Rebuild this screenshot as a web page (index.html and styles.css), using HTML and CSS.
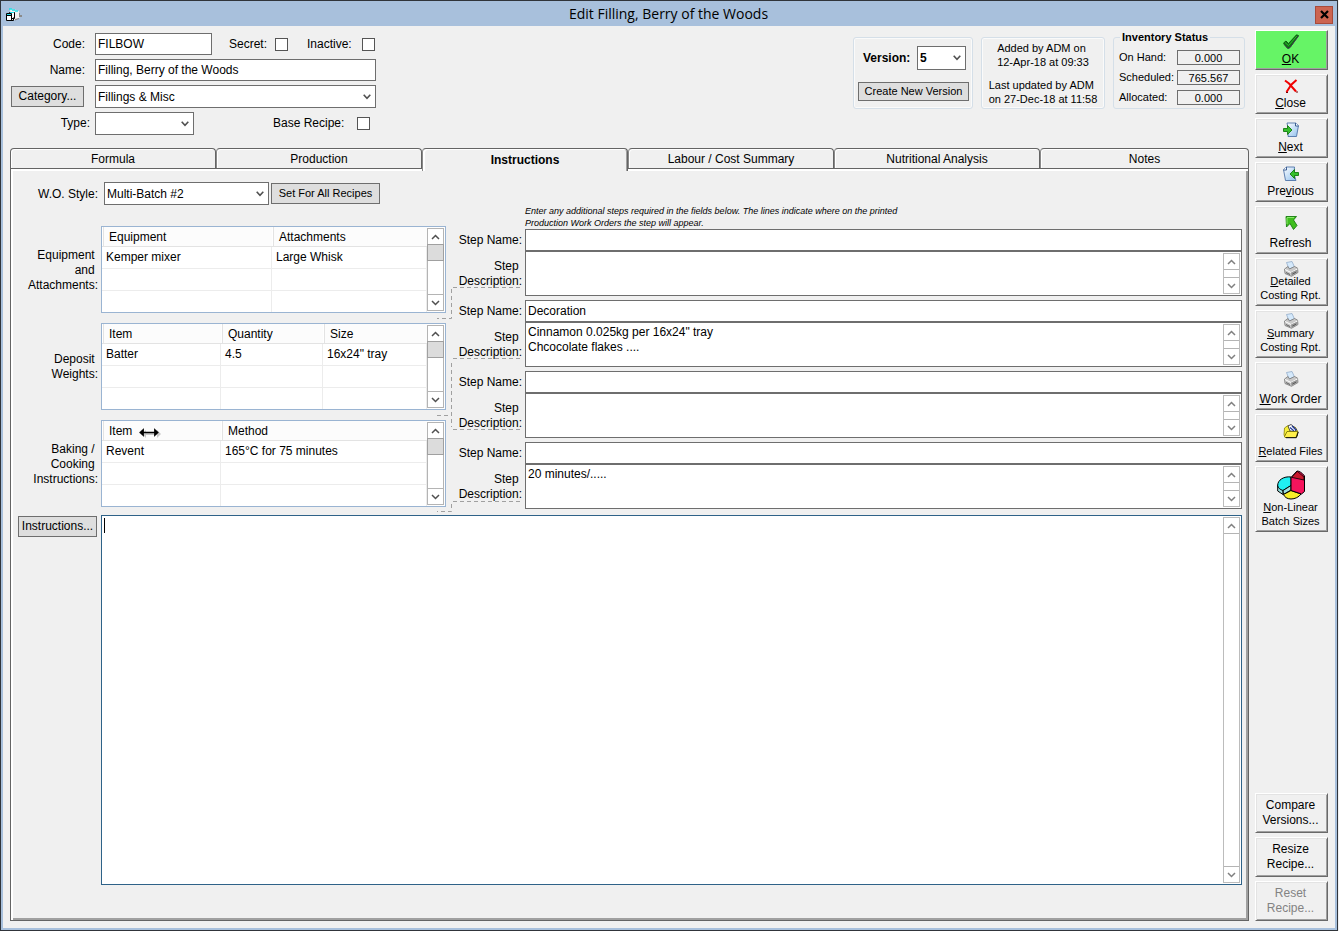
FILE: index.html
```html
<!DOCTYPE html>
<html lang="en">
<head>
<meta charset="utf-8">
<title>Edit Filling, Berry of the Woods</title>
<link rel="stylesheet" href="styles.css">
</head>
<body>
<svg class="defs" width="0" height="0" aria-hidden="true">
  <defs>
    <symbol id="up" viewBox="0 0 9 6"><path d="M1 5 4.500 1.500 8 5" fill="none" stroke="currentColor" stroke-width="1.500"/></symbol>
    <symbol id="down" viewBox="0 0 9 6"><path d="M1 1 4.500 4.500 8 1" fill="none" stroke="currentColor" stroke-width="1.500"/></symbol>
    <linearGradient id="page" x1="0" y1="0" x2="1" y2="1"><stop offset="0" stop-color="#fff"/><stop offset="1" stop-color="#8fc0ee"/></linearGradient>
    <symbol id="printer" viewBox="0 0 16 16">
      <path d="M3.500 1.500 9 .5 11.500 6 6 8z" fill="#d5e9fb" stroke="#8aa5c4" stroke-width=".7"/>
      <path d="M1.500 8 5 5.500 6.500 8 11.500 5.500 14.500 7 15 11.500 8.500 15.300 2 12.500z" fill="#c9c9c9" stroke="#777" stroke-width=".8"/>
      <path d="M2 8.500 8 11.500 14.500 8" fill="none" stroke="#fff" stroke-width="1"/>
      <path d="M8 11.500 14.500 8.500v3L8.500 15z" fill="#999"/>
      <path d="M3 11.500 7 13.500M9.500 13 13 11.200" stroke="#555" stroke-width=".9"/>
    </symbol>
  </defs>
</svg>
<div class="window">
  <header class="titlebar">
    <svg class="app-icon" width="16" height="14" viewBox="0 0 16 14" aria-hidden="true">
      <path d="M4 1h3l6 2 .5 7-5 2H5z" fill="#f2f2f2"/><path d="M3 1h3M6 2h3M9 3h3" fill="none" stroke="#20dfe8" stroke-width="1.500"/>
      <path d="M13 5h1v2h2v2h-3zM9 11l4-1v1l-4 1.500z" fill="#8a8a8a"/>
      <path d="M3.500 4.500h5v6h-5z" fill="#fff" stroke="#000"/><path d="M.500 5.500h5v7h-5z" fill="#fff" stroke="#000"/>
      <path d="M4.500 12.500h3v-3" fill="none" stroke="#000"/>
      <path d="M1 6h4v1H1zM4 4h4v1H4z" fill="#20dfe8"/><path d="M0 7h6v1H0z"/>
    </svg>
    <h1>Edit Filling, Berry of the Woods</h1>
    <button class="win-close" aria-label="Close window"><svg width="9" height="9" viewBox="0 0 9 9"><path d="M1 1 8 8M8 1 1 8" stroke="#000" stroke-width="2.200"/></svg></button>
  </header>
  <div class="body">
    <main class="content">
      <div class="top">
        <form class="form">
          <div class="row"><label class="lbl" for="code">Code:</label><input class="field code" id="code" value="FILBOW">
            <label class="secret" for="secret">Secret:</label><input type="checkbox" class="check" id="secret">
            <label class="inactive" for="inactive">Inactive:</label><input type="checkbox" class="check" id="inactive"></div>
          <div class="row"><label class="lbl" for="name">Name:</label><input class="field long" id="name" value="Filling, Berry of the Woods"></div>
          <div class="row"><button type="button" class="btn category">Category...</button><select class="field long" aria-label="Category"><option>Fillings &amp; Misc</option></select></div>
          <div class="row"><label class="lbl type" for="type">Type:</label><select class="field short" id="type"><option></option></select>
            <label class="base" for="base">Base Recipe:</label><input type="checkbox" class="check" id="base"></div>
        </form>
        <div class="groups">
          <section class="group version">
            <div class="version-row"><label for="ver">Version:</label><select class="field" id="ver"><option>5</option></select></div>
            <button class="btn small">Create New Version</button>
          </section>
          <section class="group audit">
            <p>Added by ADM on<br>12-Apr-18 at 09:33</p>
            <p>Last updated by ADM<br>on 27-Dec-18 at 11:58</p>
          </section>
          <fieldset class="group stock">
            <legend>Inventory Status</legend>
            <div class="stock-row"><span>On Hand:</span><output>0.000</output></div>
            <div class="stock-row"><span>Scheduled:</span><output>765.567</output></div>
            <div class="stock-row"><span>Allocated:</span><output>0.000</output></div>
          </fieldset>
        </div>
      </div>
      <nav class="tabs" role="tablist">
        <button class="tab" role="tab">Formula</button>
        <button class="tab" role="tab">Production</button>
        <button class="tab active" role="tab" aria-selected="true">Instructions</button>
        <button class="tab" role="tab">Labour / Cost Summary</button>
        <button class="tab" role="tab">Nutritional Analysis</button>
        <button class="tab" role="tab">Notes</button>
      </nav>
      <section class="panel">
        <div class="upper">
          <div class="lists">
            <div class="style-row"><label class="side-lbl" for="wo">W.O. Style:</label><select class="field wo" id="wo"><option>Multi-Batch #2</option></select><button class="btn small all">Set For All Recipes</button></div>
            <div class="list-row">
              <div class="side-lbl">Equipment&nbsp;<br>and&nbsp;<br>Attachments:</div>
              <div class="list">
                <table><colgroup><col class="c-170"><col></colgroup>
                  <thead><tr><th>Equipment</th><th>Attachments</th></tr></thead>
                  <tbody><tr><td>Kemper mixer</td><td>Large Whisk</td></tr><tr><td></td><td></td></tr><tr><td></td><td></td></tr></tbody></table>
                <div class="scroll"><button aria-label="Scroll up"><svg><use href="#up"/></svg></button><i class="thumb"></i><button aria-label="Scroll down"><svg><use href="#down"/></svg></button></div>
              </div>
            </div>
            <div class="list-row">
              <div class="side-lbl">Deposit&nbsp;<br>Weights:</div>
              <div class="list">
                <table><colgroup><col class="c-119"><col class="c-102"><col></colgroup>
                  <thead><tr><th>Item</th><th>Quantity</th><th>Size</th></tr></thead>
                  <tbody><tr><td>Batter</td><td>4.5</td><td>16x24" tray</td></tr><tr><td></td><td></td><td></td></tr><tr><td></td><td></td><td></td></tr></tbody></table>
                <div class="scroll"><button aria-label="Scroll up"><svg><use href="#up"/></svg></button><i class="thumb"></i><button aria-label="Scroll down"><svg><use href="#down"/></svg></button></div>
              </div>
            </div>
            <div class="list-row">
              <div class="side-lbl">Baking /&nbsp;<br>Cooking&nbsp;<br>Instructions:</div>
              <div class="list">
                <table><colgroup><col class="c-119"><col></colgroup>
                  <thead><tr><th>Item</th><th>Method</th></tr></thead>
                  <tbody><tr><td>Revent</td><td>165°C for 75 minutes</td></tr><tr><td></td><td></td></tr><tr><td></td><td></td></tr></tbody></table>
                <div class="scroll"><button aria-label="Scroll up"><svg><use href="#up"/></svg></button><i class="thumb"></i><button aria-label="Scroll down"><svg><use href="#down"/></svg></button></div>
                <svg class="pointer" width="24" height="14" viewBox="0 0 24 14" aria-hidden="true">
                  <path d="M3 8 7 4v3h11V4l4 4-4 4V9H7v3z" fill="#000" opacity=".2"/>
                  <path d="M0 6.500 5 2v4h10V2l5 4.500L15 11V7H5v4z" fill="#000" stroke="#fff" stroke-width=".2"/>
                  <path d="M3 6.500h14" stroke="#000" stroke-width="1.500"/>
                </svg>
              </div>
            </div>
          </div>
          <div class="steps">
            <p class="hint">Enter any additional steps required in the fields below. The lines indicate where on the printed<br>Production Work Orders the step will appear.</p>
            <div class="step">
              <label for="n1">Step Name:</label><input class="field" id="n1">
              <label class="desc" for="d1">Step&nbsp;<br>Description:</label>
              <div class="area"><textarea id="d1"></textarea><div class="scroll light"><button aria-label="Scroll up"><svg><use href="#up"/></svg></button><button aria-label="Scroll down"><svg><use href="#down"/></svg></button></div></div>
            </div>
            <div class="step">
              <label for="n2">Step Name:</label><input class="field" id="n2" value="Decoration">
              <label class="desc" for="d2">Step&nbsp;<br>Description:</label>
              <div class="area"><textarea id="d2">Cinnamon 0.025kg per 16x24" tray
Chcocolate flakes ....</textarea><div class="scroll light"><button aria-label="Scroll up"><svg><use href="#up"/></svg></button><button aria-label="Scroll down"><svg><use href="#down"/></svg></button></div></div>
            </div>
            <div class="step">
              <label for="n3">Step Name:</label><input class="field" id="n3">
              <label class="desc" for="d3">Step&nbsp;<br>Description:</label>
              <div class="area"><textarea id="d3"></textarea><div class="scroll light"><button aria-label="Scroll up"><svg><use href="#up"/></svg></button><button aria-label="Scroll down"><svg><use href="#down"/></svg></button></div></div>
            </div>
            <div class="step">
              <label for="n4">Step Name:</label><input class="field" id="n4">
              <label class="desc" for="d4">Step&nbsp;<br>Description:</label>
              <div class="area"><textarea id="d4">20 minutes/.....</textarea><div class="scroll light"><button aria-label="Scroll up"><svg><use href="#up"/></svg></button><button aria-label="Scroll down"><svg><use href="#down"/></svg></button></div></div>
            </div>
            <!-- Dashed connectors from each step to its place between the lists -->
            <svg class="links" width="86" height="230" viewBox="0 0 86 230" fill="none" stroke="#a0a0a0" stroke-dasharray="4 3" aria-hidden="true">
              <path d="M16 2.500H85M14.500 4V33.500H0"/>
              <path d="M16 73.500H85M14.500 78V142M0 130.500H14"/>
              <path d="M16 144.500H85"/>
              <path d="M16 216.500H85M14.500 219V226.500H0"/>
            </svg>
          </div>
        </div>
        <div class="lower">
          <button class="btn instr">Instructions...</button>
          <div class="area big"><textarea aria-label="Instructions"></textarea><i class="caret"></i><div class="scroll light"><button aria-label="Scroll up"><svg><use href="#up"/></svg></button><button aria-label="Scroll down"><svg><use href="#down"/></svg></button></div></div>
        </div>
      </section>
    </main>
    <aside class="actions">
      <button class="act ok"><svg width="18" height="16" viewBox="0 0 18 16"><path d="M1.500 9 4 7l2.500 2.500L14.500.8l2 .7L8 13.500l-2.500.8z" fill="#0b7a12" stroke="#054d08" stroke-width=".8"/><path d="M3 8.500 6.500 11.500 15 1.800" fill="none" stroke="#30b030" stroke-width="1"/><path d="M2 10.500 6 14.500 8 13.500 16.500 2" fill="none" stroke="#4a2a5a" stroke-width=".9"/></svg><span><u>O</u>K</span></button>
      <button class="act"><svg width="16" height="16" viewBox="0 0 16 16"><path d="M2 2.500 6 5.500 13 13.500M13.500 2 8.500 6.500 3.500 14" fill="none" stroke="#f00000" stroke-width="2"/><path d="M13 14h2M3 14.500h2" stroke="#700" stroke-width="1"/></svg><span><u>C</u>lose</span></button>
      <button class="act"><svg width="16" height="16" viewBox="0 0 16 16"><path d="M4 1h8.500L15.500 3.500 13.500 14.500H5L5.500 8z" fill="url(#page)" stroke="#4f74a8" stroke-width=".9"/><path d="M12.500 1v3h3" fill="#fff" stroke="#2b4f88" stroke-width=".9"/><path d="M.500 6.500h4V3.500l4.500 4.500-4.500 4.500V9.500h-4z" fill="#35c02c" stroke="#127a10" stroke-width=".9"/></svg><span><u>N</u>ext</span></button>
      <button class="act"><svg width="16" height="16" viewBox="0 0 16 16"><path d="M11.500 1H3.500L.500 3.500 2.500 14.500H13L11 8z" fill="url(#page)" stroke="#4f74a8" stroke-width=".9"/><path d="M3.500 1v3H.5" fill="#fff" stroke="#2b4f88" stroke-width=".9"/><path d="M15.500 6.500h-4V3.500L7 8l4.500 4.500V9.500h4z" fill="#35c02c" stroke="#127a10" stroke-width=".9"/></svg><span>Pre<u>v</u>ious</span></button>
      <button class="act tall refresh"><svg width="16" height="16" viewBox="0 0 16 16"><path d="M3 1.500h10.500L10.500 5l3.500 5.500-3.500 4L7 8.500 3.500 12z" fill="#3fbe1e" stroke="#187a10" stroke-width=".9"/><path d="M4 2.500h7M4 3v6" stroke="#8ae86a" stroke-width="1"/></svg><span>Refresh</span></button>
      <button class="act tall dense"><svg width="16" height="16"><use href="#printer"/></svg><span><u>D</u>etailed<br>Costing Rpt.</span></button>
      <button class="act tall dense"><svg width="16" height="16"><use href="#printer"/></svg><span><u>S</u>ummary<br>Costing Rpt.</span></button>
      <button class="act tall"><svg width="16" height="16"><use href="#printer"/></svg><span><u>W</u>ork Order</span></button>
      <button class="act tall narrow"><svg width="16" height="16" viewBox="0 0 16 16"><path d="M1.500 5 5 2.500 8 4.500 12 4 14.500 8v5l-2 1.500h-10L1 12z" fill="#f7ef3a" stroke="#8a8200" stroke-width=".8"/><path d="M5 3 8 1.500 13.500 6 12 8.500 7 8z" fill="#fff" stroke="#222" stroke-width=".8"/><path d="M9 3 13.500 7.500M7 4.500l4 3.500" stroke="#223a9a" stroke-width="1.200"/><path d="M1.500 13.500 4 8.500H15L13 14.500H2z" fill="#fff04a" stroke="#6e6800" stroke-width=".8"/><path d="M3 14.700H13.300L15.300 9" fill="none" stroke="#111" stroke-width="1"/></svg><span><u>R</u>elated Files</span></button>
      <button class="act dense pie"><svg width="28" height="30" viewBox="0 0 28 30"><path d="M.700 15v6l5.300 3.500V20z" fill="#9adedc" stroke="#000"/><path d="M14 7C7 6 .500 10 .700 15.500 1 18 3 19.500 6 20.500l8-5z" fill="#20eff2" stroke="#000"/><path d="M6 20.500 14 15.500V20l-7.500 4.500z" fill="#9adedc" stroke="#000"/><path d="M6.500 24.500 14 20.500 24 24C22 27 18 29 14 29s-6.500-2-7.500-4.500z" fill="#f8ef28" stroke="#000"/><path d="M14 7.500 20 1c2 0 5 1.500 7.500 5v15.500L24.500 24 14 20.500z" fill="#f5145c" stroke="#000"/><path d="M14.500 7.300 20.300 1.300 27 7v3z" fill="#c8182c" stroke="#000" stroke-width=".8"/></svg><span><u>N</u>on-Linear<br>Batch Sizes</span></button>
      <div class="spacer"></div>
      <button class="act text">Compare<br>Versions...</button>
      <button class="act text">Resize<br>Recipe...</button>
      <button class="act text" disabled>Reset<br>Recipe...</button>
    </aside>
  </div>
</div>
</body>
</html>
```

FILE: styles.css
```css
* { box-sizing: border-box; }
html, body { height: 100%; margin: 0; }
body {
  padding-right: 1px;
  background: #f0f0f0;
  color: #000;
  font: 12px/15px "Liberation Sans", Arial, sans-serif;
}
button, input, select, textarea { font: inherit; color: inherit; margin: 0; border-radius: 0; }
button { padding: 0; }
p { margin: 0; }
.defs { position: absolute; }

.window {
  display: flex;
  flex-direction: column;
  min-height: 100%;
  background: #a8c0dc;
  border: 1px solid #30343a;
}
.titlebar {
  display: flex;
  align-items: center;
  height: 25px;
  padding: 0 4px 0 5px;
}
.app-icon { margin-top: 2px; }
.titlebar h1 {
  flex: 1;
  margin: 0;
  text-align: center;
  font: 14px/24px "Open Sans", "Noto Sans", sans-serif;
}
.win-close {
  display: grid;
  place-items: center;
  width: 18px;
  height: 18px;
  margin-top: 2px;
  background: #cc6450;
  border: 1px solid #a84a3a;
}
.body {
  flex: 1;
  display: flex;
  gap: 6px;
  margin: 0 2px 2px;
  padding: 0 7px;
  background: #f0f0f0;
}
.content { flex: 1; min-width: 0; display: flex; flex-direction: column; padding-bottom: 7px; }

/* Recipe header */
.top { display: flex; justify-content: space-between; padding: 4px 4px 0 1px; height: 122px; }
.form { display: flex; flex-direction: column; gap: 4px; padding-top: 3px; }
.row { display: flex; align-items: center; }
.lbl { width: 74px; margin-right: 10px; text-align: right; }
.lbl.type { width: 79px; margin-right: 5px; }
.field {
  height: 22px;
  padding: 0 2px;
  background: #fff;
  border: 1px solid #6e6e6e;
}
select.field {
  appearance: none;
  height: 23px;
  padding: 1px 0 0 2px;
  background: #fff url("data:image/svg+xml,%3Csvg xmlns='http://www.w3.org/2000/svg' width='8' height='6'%3E%3Cpath d='M.7 .8 4 4.300 7.300 .8' fill='none' stroke='%23505050' stroke-width='1.600'/%3E%3C/svg%3E") no-repeat right 4px center;
}
.code { width: 117px; }
.long { width: 281px; }
.short { width: 99px; }
.secret { margin: 0 8px 0 17px; }
.inactive { margin: 0 10px 0 19px; }
.base { margin: 0 13px 0 79px; }
.check {
  appearance: none;
  width: 13px;
  height: 13px;
  background: #fff;
  border: 1px solid #555;
}
.btn {
  height: 21px;
  background: #dedede;
  border: 1px solid #6e6e6e;
  white-space: nowrap;
}
.btn.small { font-size: 11px; }
.category { width: 73px; margin-right: 11px; }

.groups { display: flex; align-items: flex-end; gap: 8px; height: 79px; }
.group {
  height: 72px;
  margin: 0;
  border: 1px solid #d5dfe8;
  border-radius: 3px;
  box-shadow: inset 0 0 0 1px #fafafa;
  font-size: 11px;
}
.version { width: 120px; padding: 8px 3px 0 4px; }
.version-row { display: flex; align-items: center; justify-content: space-between; padding: 0 3px 0 5px; font-size: 12px; font-weight: bold; }
.version-row .field { width: 49px; height: 24px; }
.version .btn { width: 111px; height: 19px; margin-top: 12px; }
.audit { display: flex; flex-direction: column; align-items: center; gap: 9px; width: 124px; padding-top: 3px; line-height: 14px; white-space: nowrap; }
.stock { width: 132px; min-width: 0; height: 79px; padding: 6px 4px 0 5px; box-shadow: none; }
.stock legend { margin-left: 1px; padding: 0 2px; font-weight: bold; line-height: 14px; }
.stock-row { display: flex; justify-content: space-between; height: 20px; line-height: 14px; }
.stock-row output { width: 63px; height: 15px; border: 1px solid #6e6e6e; text-align: center; }

/* Tabs */
.tabs { display: flex; height: 20px; }
.tab {
  flex: 206 1 0;
  padding-top: 1px;
  background: #f0f0f0;
  border: 1px solid #646464;
  border-bottom: 0;
  border-left-color: #8a8a8a;
  border-radius: 4px 4px 0 0;
  box-shadow: inset 1px 1px #fff;
}
.tab:first-child { border-left-color: #646464; }
.tab:last-child { flex-grow: 209; }
.tab.active {
  z-index: 1;
  height: 23px;
  padding: 0;
  font-weight: bold;
  box-shadow: inset 2px 1px #fff, inset -1px 0 #a0a0a0;
}
.panel {
  flex: 1;
  display: flex;
  flex-direction: column;
  padding: 13px 6px 35px 2px;
  border: 1px solid #646464;
  box-shadow: inset 2px 2px #fff, inset -2px -2px #a0a0a0;
}
.upper { display: flex; gap: 7px; }
.lists { display: flex; flex-direction: column; gap: 10px; width: 433px; }
.style-row { display: flex; align-items: center; margin-bottom: 11px; }
.side-lbl { width: 85px; margin-right: 3px; padding-top: 1px; text-align: right; white-space: nowrap; }
.style-row .side-lbl { margin-right: 6px; }
.wo { width: 165px; margin-right: 2px; }
.all { width: 109px; }
.list-row { display: flex; align-items: center; }
.list {
  position: relative;
  flex: 1;
  display: flex;
  height: 87px;
  background: #fff;
  border: 1px solid #9ab4d2;
}
.list table { flex: 1; table-layout: fixed; width: 325px; height: 85px; border-collapse: separate; border-spacing: 0; }
.c-170 { width: 170px; }
.c-119 { width: 119px; }
.c-102 { width: 102px; }
th {
  height: 20px;
  padding: 1px 0 0 7px;
  background: #fcfcfc;
  border-bottom: 1px solid #e3e3e3;
  box-shadow: inset 1px 0 #fff, inset 2px 0 #e3e3e3;
  font-weight: normal;
  line-height: 18px;
  text-align: left;
}
td {
  height: 22px;
  padding: 0 0 0 4px;
  border-right: 1px solid #ececec;
  border-bottom: 1px solid #ececec;
  line-height: 20px;
  vertical-align: top;
}
tr:last-child td { height: 21px; border-bottom: 0; }
thead tr:last-child th { border-bottom: 1px solid #e3e3e3; }
.pointer { position: absolute; left: 37px; top: 5px; }

.scroll {
  display: flex;
  flex-direction: column;
  width: 17px;
  margin: 1px 1px 1px 0;
  background: #fff;
  border: 1px solid #b4b4b4;
  color: #505050;
}
.scroll button {
  display: grid;
  place-items: center;
  width: 15px;
  height: 15px;
  background: #fff;
  border: 0;
  box-shadow: 0 1px #b4b4b4;
}
.scroll button:last-child { margin-top: auto; box-shadow: 0 -1px #b4b4b4; }
.scroll svg { width: 9px; height: 6px; }
.thumb { height: 17px; margin: 0 -1px; background: #dcdcdc; border: 1px solid #a0a0a0; }
.light { border-color: #bcbcbc; color: #808080; }

/* Additional steps */
.steps { position: relative; flex: 1; display: flex; flex-direction: column; gap: 4px; margin-top: 23px; }
.hint { margin: 0 0 -4px 72px; font-size: 9px; font-style: italic; line-height: 12px; }
.step { display: grid; grid-template-columns: 69px 1fr; column-gap: 3px; grid-template-rows: 22px 45px; align-items: center; }
.step label { text-align: right; white-space: nowrap; }
.area { display: flex; align-self: stretch; position: relative; background: #fff; border: 1px solid #6e6e6e; }
.area textarea { flex: 1; min-width: 0; padding: 2px; border: 0; background: none; outline: 0; resize: none; overflow: hidden; }
.area .scroll { margin: 1px; }
.links { position: absolute; left: -16px; top: 80px; }

.lower { flex: 1; display: flex; align-items: flex-start; gap: 4px; margin-top: 6px; padding-left: 5px; }
.instr { width: 79px; margin-top: 1px; }
.big { flex: 1; border-color: #2e6288; }
.caret { position: absolute; left: 2px; top: 2px; width: 1px; height: 15px; background: #000; }

/* Action buttons */
.actions { display: flex; flex-direction: column; gap: 4px; width: 73px; padding: 4px 0 7px; }
.act {
  display: flex;
  flex-direction: column;
  align-items: center;
  height: 40px;
  padding: 3px 2px 0 0;
  background: #f0f0f0;
  border: 1px solid;
  border-color: #fff #696969 #696969 #fff;
  box-shadow: inset 1px 1px #e3e3e3, inset -1px -1px #a0a0a0;
  line-height: 18px;
  white-space: nowrap;
}
.ok { background: #66f466; box-shadow: inset -1px -1px #a0a0a0; }
.tall { height: 48px; padding-top: 8px; }
.tall span { margin-top: 3px; }
.dense { padding-top: 2px; font-size: 11px; line-height: 14px; }
.dense span { margin-top: -3px; }
.narrow { font-size: 11px; }
.pie { height: 66px; padding-top: 3px; }
.pie span { margin-top: 0; }
.text { display: block; padding: 0 2px 0 0; line-height: 15px; }
.text:disabled { color: #838383; }
.spacer { flex: 1; }
```
